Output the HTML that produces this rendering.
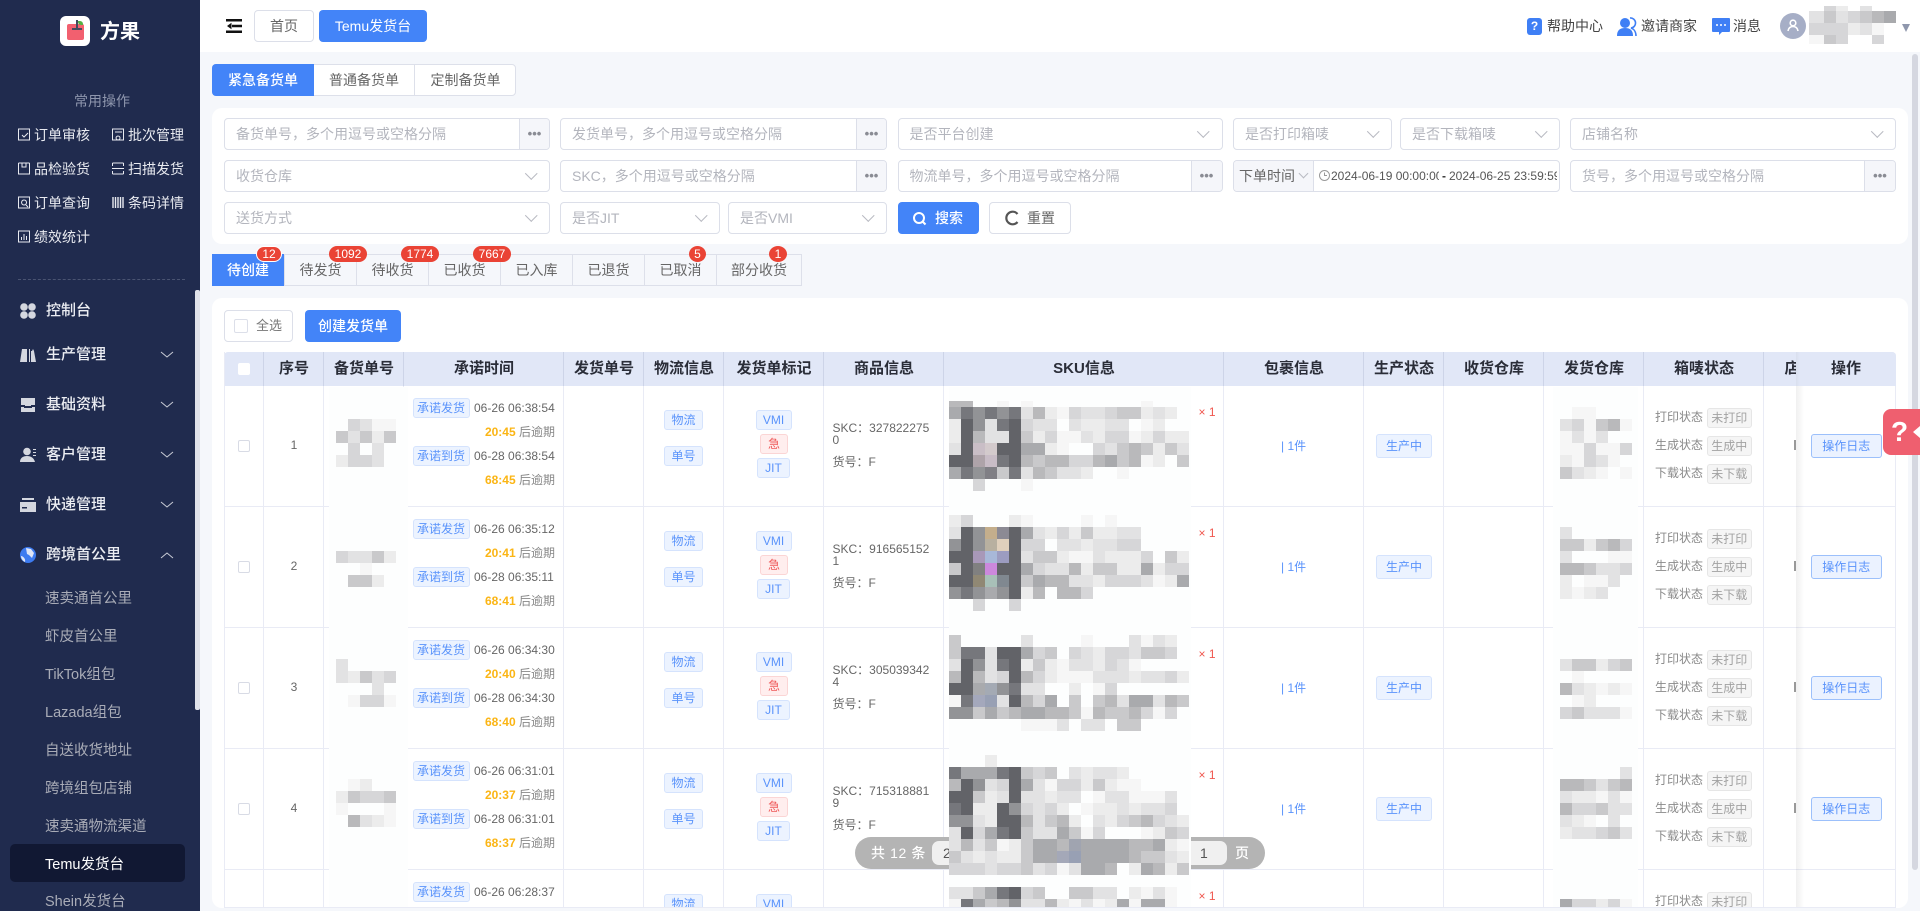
<!DOCTYPE html>
<html lang="zh-CN"><head><meta charset="utf-8"><title>Temu发货台</title>
<style>
*{box-sizing:border-box;margin:0;padding:0}
html,body{width:1920px;height:911px;overflow:hidden}
body{position:relative;background:#f5f7fb;font:12px "Liberation Sans","Noto Sans CJK SC",sans-serif;color:#666}
.a,.a2{position:absolute;white-space:nowrap}
#side{position:absolute;left:0;top:0;width:200px;height:911px;background:#202b4e;overflow:hidden;color:#fff}
#side>*{position:absolute;white-space:nowrap}
.sc{font-size:14px;line-height:20px;color:#e8eaf0}
.mi{left:46px;font-size:15px;line-height:20px;color:#eceef3;font-weight:500}
.sm{left:45px;font-size:14.5px;line-height:20px;color:#a9acb7}
.i{position:absolute;height:32px;border:1px solid #dcdfe9;border-radius:4px;background:#fff;line-height:30px;padding-left:11px;color:#b3b5bd;font-size:14px;white-space:nowrap;overflow:hidden}
.s::after{content:"";position:absolute;right:14px;top:8px;width:7.5px;height:7.5px;border-right:1px solid #b8bac2;border-bottom:1px solid #b8bac2;transform:rotate(45deg)}
.e{position:absolute;right:0;top:0;width:30px;height:30px;background:#f5f6fa;border-left:1px solid #dcdfe9;text-align:center;color:#8a8c94;font-size:13px;font-weight:700;line-height:30px;letter-spacing:0}
.st{position:absolute;top:254px;height:32px;width:73px;border:1px solid #dde0ea;background:#f5f7fb;text-align:center;line-height:30px;font-size:14px;color:#666}
.b{position:absolute;top:246px;height:16px;background:#ea4335;color:#fff;border-radius:8px;font-size:12px;line-height:16px;text-align:center}
.th{position:absolute;top:352px;height:34px;line-height:34px;text-align:center;font-size:15px;font-weight:700;color:#2a2d38;white-space:nowrap}
.vl{position:absolute;top:352px;width:1px;height:555px;background:#e9ebf5}
.vh{position:absolute;top:352px;width:1px;height:34px;background:#cdd4e8}
.hl{position:absolute;left:224px;width:1672px;height:1px;background:#e9ebf5}
.r{position:absolute;left:0;width:1920px;height:121px}
.r>*{position:absolute;white-space:nowrap}
.cb{left:238px;top:54px;width:12px;height:12px;border:1px solid #d8dbe5;border-radius:2px;background:#fff}
.n{left:264px;width:60px;top:49px;line-height:20px;text-align:center;font-size:12px}
.t{border:1px solid #d5e3fd;background:#ecf3ff;color:#5a93fb;border-radius:3px;text-align:center;height:20px;line-height:18px}
.d{left:474px;line-height:20px;height:20px}
.o{right:1365px;line-height:20px;height:20px;color:#888}
.o b{color:#fbb514}
.u{left:1706.5px;width:45.5px;height:20px;line-height:18px;text-align:center;background:#f5f5f5;border:1px solid #e6e6e6;border-radius:3px;color:#a2a2a2}
.l{left:1655px;height:20px;line-height:18px;color:#8a8a8a}
.skc{left:832.5px;top:36px;width:101px;line-height:12px;white-space:normal!important;word-break:break-all}
.m{position:absolute;display:flex;flex-wrap:wrap}
.m hr{width:12px;height:12px;border:0;margin:0;flex:none;background:transparent}
hr[k]{background:#626368!important}hr[m]{background:#76777c!important}hr[n]{background:#929396!important}hr[o]{background:#a9aaad!important}hr[p]{background:#b9b9bb!important}hr[q]{background:#c9c9cb!important}hr[r]{background:#d6d6d8!important}hr[s]{background:#e2e2e3!important}hr[t]{background:#ececec!important}hr[u]{background:#f6f6f6!important}
.sk{left:949px;width:240px}.wh{left:1560px;width:72px}.no{left:336px;width:72px}
.op{position:absolute;left:1810.6px;width:71.4px;height:24px;line-height:22px;text-align:center;background:#ebf2ff;border:1px solid #9cc0fb;border-radius:3px;color:#5a93fb}
</style></head><body>

<!-- header -->
<div class="a" style="left:200px;top:0;width:1720px;height:52px;background:#fff"></div>
<svg class="a" style="left:226px;top:19px" width="16" height="14" viewBox="0 0 16 14"><path d="M0 1.200h16M6 7h10M0 12.800h16" stroke="#111" stroke-width="2.500" fill="none"/><path d="M5.500 3.800L1 7l4.500 3.200z" fill="#111"/></svg>
<div class="a" style="left:254px;top:10px;width:60px;height:32px;border:1px solid #dcdfe9;border-radius:4px;background:#fff;text-align:center;line-height:30px;font-size:14px">首页</div>
<div class="a" style="left:319px;top:10px;width:108px;height:32px;border-radius:4px;background:#4384f8;color:#fff;text-align:center;line-height:32px;font-size:14px">Temu发货台</div>
<div class="a" style="left:1527px;top:18px;width:15px;height:17px;border-radius:3px;background:#3f7ff5;color:#fff;font-weight:700;font-size:12px;line-height:17px;text-align:center">?</div>
<div class="a" style="left:1547px;top:16px;font-size:14px;line-height:20px;color:#444">帮助中心</div>
<svg class="a" style="left:1617px;top:17px" width="20" height="19" viewBox="0 0 20 19"><circle cx="8" cy="6" r="5" fill="#3f7ff5"/><path d="M0 19c0-6 3-8 8-8s8 2 8 8z" fill="#3f7ff5"/><path d="M13 1a5 5 0 0 1 1 10c3 1 5 4 5 8" stroke="#3f7ff5" stroke-width="1.6" fill="none"/></svg>
<div class="a" style="left:1641px;top:16px;font-size:14px;line-height:20px;color:#444">邀请商家</div>
<svg class="a" style="left:1712px;top:18px" width="18" height="18" viewBox="0 0 18 18"><path d="M1 0h16a1 1 0 0 1 1 1v12a1 1 0 0 1-1 1h-7l-3 3v-3H1a1 1 0 0 1-1-1V1a1 1 0 0 1 1-1z" fill="#3f7ff5"/><circle cx="5" cy="7" r="1" fill="#fff"/><circle cx="9" cy="7" r="1" fill="#fff"/><circle cx="13" cy="7" r="1" fill="#fff"/></svg>
<div class="a" style="left:1733px;top:16px;font-size:14px;line-height:20px;color:#444">消息</div>
<div class="a" style="left:1780px;top:13px;width:26px;height:26px;border-radius:50%;background:#a6aec6"></div>
<svg class="a" style="left:1787px;top:19px" width="12" height="13" viewBox="0 0 12 13"><circle cx="6" cy="4" r="2.8" fill="none" stroke="#fff" stroke-width="1.6"/><path d="M1 12c.5-3 2-4.500 5-4.500s4.500 1.500 5 4.500" fill="none" stroke="#fff" stroke-width="1.6"/></svg>
<div class="m" style="left:1809px;top:6px;width:87px">
<hr style="height:5px;width:15px"><hr r style="height:5px"><hr t style="height:5px"><hr style="height:5px"><hr s style="height:5px"><hr style="height:5px"><hr style="height:5px">
<hr s style="width:15px"><hr q><hr s><hr r><hr q><hr p><hr o>
<hr r style="width:15px"><hr r><hr r><hr t><hr s><hr u><hr>
<hr u style="height:9px;width:15px"><hr q style="height:9px"><hr r style="height:9px"><hr style="height:9px"><hr style="height:9px"><hr r style="height:9px"><hr style="height:9px">
</div>
<div class="a" style="left:1902px;top:24px;border-left:4.500px solid transparent;border-right:4.500px solid transparent;border-top:8px solid #8f97ad"></div>

<!-- sidebar -->
<div id="side">
<div style="left:60px;top:16px;width:30px;height:30px;border-radius:6px;background:#fff"></div>
<div style="left:67px;top:24px;width:17px;height:16px;border-radius:2px;background:#f2606f"></div>
<div style="left:76px;top:20px;width:2px;height:9px;background:#444a5e"></div>
<div style="left:72px;top:28px;width:10px;height:2px;background:#444a5e"></div>
<div style="left:78px;top:21px;width:5px;height:4px;background:#52b043;border-radius:0 3px 0 3px"></div>
<div style="left:100px;top:18px;font-size:20px;line-height:28px;font-weight:700;color:#fff">方果</div>
<div style="left:74px;top:91px;font-size:14px;line-height:20px;color:#8e96ad">常用操作</div>

<svg style="left:0;top:0" width="200" height="250" fill="none" stroke="#e8eaf0" stroke-width="1"><path d="M18.500 129h11v11h-11zM22 135l2 2 4-4"/><path d="M112.500 129h11v11h-11zM115 132h7M118 136a2 2 0 1 0 .1 0"/><path d="M18.500 163v11h11v-11M18.500 163h11M22 163v4h4v-4" stroke-width="1"/><path d="M112.500 163h11M112.500 174h11M112.500 163v3M123.500 163v3M112.500 174v-3M123.500 174v-3M112 168.500h12" /><path d="M18.500 197h11v11h-11zM24 200a2.500 2.500 0 1 0 .1 0M26 205l2 2"/><path d="M113 197v11M115.500 197v11M118 197v11M120.500 197v11M123 197v11" stroke-width="1.400"/><path d="M18.500 231h11v11h-11zM21.500 240v-3M24 240v-6M26.500 240v-4"/></svg>
<div class="sc" style="left:34px;top:125px">订单审核</div><div class="sc" style="left:128px;top:125px">批次管理</div>
<div class="sc" style="left:34px;top:159px">品检验货</div><div class="sc" style="left:128px;top:159px">扫描发货</div>
<div class="sc" style="left:34px;top:193px">订单查询</div><div class="sc" style="left:128px;top:193px">条码详情</div>
<div class="sc" style="left:34px;top:227px">绩效统计</div>
<div style="left:18px;top:279px;width:167px;border-top:1px dashed #4a5472"></div>
<div style="left:195px;top:290px;width:5px;height:420px;background:#dfe1e9;border-radius:2px"></div>

<svg style="left:20px;top:303px" width="16" height="16" fill="#d4d7df"><circle cx="4" cy="4" r="3.800"/><circle cx="12" cy="4" r="3.800"/><circle cx="4" cy="12" r="3.800"/><circle cx="12" cy="12" r="3.800"/></svg>
<div class="mi" style="top:301px">控制台</div>
<svg style="left:20px;top:347px" width="16" height="16" fill="#d4d7df"><path d="M0 15L2 2h5v13zM9 15V2h1v13zM11 15V4h1l1-2 1 2 2 11z"/></svg>
<div class="mi" style="top:345px">生产管理</div>
<svg style="left:20px;top:397px" width="16" height="16" fill="#d4d7df"><path d="M1 1h14v7h-4v1H5V8H1zM1 10h3v1h8v-1h3v5H1z"/></svg>
<div class="mi" style="top:395px">基础资料</div>
<svg style="left:20px;top:447px" width="17" height="16" fill="#d4d7df"><circle cx="7" cy="4.500" r="3.800"/><path d="M0 15c0-4 3-6 7-6s7 2 8 6zM13 2h3v1h-3zM13 5h3v1h-3zM13 8h3v1h-3z"/></svg>
<div class="mi" style="top:445px">客户管理</div>
<svg style="left:20px;top:497px" width="16" height="16" fill="#d4d7df"><path d="M2 1h12v2H2zM0 5h16v10H0z"/><path d="M2 10h5v1.500H2z" fill="#202b4e"/></svg>
<div class="mi" style="top:495px">快递管理</div>
<svg style="left:20px;top:547px" width="16" height="16"><circle cx="8" cy="8" r="8" fill="#3d7bf0"/><path d="M6 1l5 1 3 4-2 5-3-3-2-1zM1 9c2 0 5 3 4 6C3 14 1 12 1 9z" fill="#dfe6f7"/></svg>
<div class="mi" style="top:545px">跨境首公里</div>
<svg style="left:0;top:0" width="200" height="600" fill="none" stroke="#c9ccd6" stroke-width="1"><path d="M161 352l6 5 6-5M161 402l6 5 6-5M161 452l6 5 6-5M161 502l6 5 6-5M161 558l6-5 6 5"/></svg>
<div class="sm" style="top:589px">速卖通首公里</div>
<div class="sm" style="top:627px">虾皮首公里</div>
<div class="sm" style="top:665px">TikTok组包</div>
<div class="sm" style="top:703px">Lazada组包</div>
<div class="sm" style="top:741px">自送收货地址</div>
<div class="sm" style="top:779px">跨境组包店铺</div>
<div class="sm" style="top:817px">速卖通物流渠道</div>
<div style="left:10px;top:844px;width:175px;height:38px;border-radius:5px;background:#111833"></div>
<div class="sm" style="top:855px;color:#fff">Temu发货台</div>
<div class="sm" style="top:894px;line-height:17px;height:17px">Shein发货台</div>
</div>

<!-- order type tabs -->
<div class="a" style="left:212px;top:64px;width:304px;height:32px;border:1px solid #dde0ea;border-radius:4px;background:#fff"></div>
<div class="a" style="left:212px;top:64px;width:102px;height:32px;border-radius:4px 0 0 4px;background:#4384f8;color:#fff;font-size:14px;font-weight:500;line-height:32px;text-align:center">紧急备货单</div>
<div class="a" style="left:314px;top:64px;width:101px;height:32px;font-size:14px;line-height:32px;text-align:center;border-right:1px solid #dde0ea">普通备货单</div>
<div class="a" style="left:415px;top:64px;width:101px;height:32px;font-size:14px;line-height:32px;text-align:center">定制备货单</div>

<!-- filter card -->
<div class="a" style="left:212px;top:108px;width:1696px;height:136px;border-radius:10px;background:#fff"></div>
<div class="i" style="left:224px;top:118px;width:326px">备货单号，多个用逗号或空格分隔<div class="e">•••</div></div>
<div class="i" style="left:560px;top:118px;width:327px">发货单号，多个用逗号或空格分隔<div class="e">•••</div></div>
<div class="i s" style="left:897.500px;top:118px;width:325px">是否平台创建</div>
<div class="i s" style="left:1233px;top:118px;width:159px">是否打印箱唛</div>
<div class="i s" style="left:1400px;top:118px;width:160px">是否下载箱唛</div>
<div class="i s" style="left:1570px;top:118px;width:326px">店铺名称</div>
<div class="i s" style="left:224px;top:160px;width:326px">收货仓库</div>
<div class="i" style="left:560px;top:160px;width:327px">SKC，多个用逗号或空格分隔<div class="e">•••</div></div>
<div class="i" style="left:897.500px;top:160px;width:325px">物流单号，多个用逗号或空格分隔<div class="e" style="width:31px">•••</div></div>
<div class="i" style="left:1233px;top:160px;width:327px;padding:0"></div>
<div class="a" style="left:1234px;top:161px;width:80px;height:30px;background:#f5f6fa;border-right:1px solid #dcdfe9;border-radius:4px 0 0 4px;font-size:14px;line-height:30px;padding-left:5px;color:#666">下单时间</div>
<div class="a" style="left:1300px;top:170px;width:7px;height:7px;border-right:1px solid #b8bac2;border-bottom:1px solid #b8bac2;transform:rotate(45deg)"></div>
<svg class="a" style="left:1319px;top:170px" width="11" height="11" fill="none" stroke="#999" stroke-width="1"><circle cx="5.500" cy="5.500" r="5"/><path d="M5.500 2.500v3h2.500"/></svg>
<div class="a" style="left:1331px;top:168px;width:108px;overflow:hidden;line-height:16px;color:#555">2024-06-19 00:00:00</div>
<div class="a" style="left:1442px;top:168px;line-height:16px;color:#333;font-weight:700">-</div>
<div class="a" style="left:1449px;top:168px;width:108px;overflow:hidden;line-height:16px;color:#555">2024-06-25 23:59:59</div>
<div class="i" style="left:1570px;top:160px;width:326px">货号，多个用逗号或空格分隔<div class="e" style="width:31px">•••</div></div>
<div class="i s" style="left:224px;top:202px;width:326px">送货方式</div>
<div class="i s" style="left:560px;top:202px;width:160px">是否JIT</div>
<div class="i s" style="left:728px;top:202px;width:159px">是否VMI</div>
<div class="a" style="left:897.500px;top:202px;width:81px;height:32px;border-radius:4px;background:#4384f8"></div>
<svg class="a" style="left:912px;top:211px" width="15" height="15" fill="none" stroke="#fff" stroke-width="2"><circle cx="7" cy="7" r="5"/><path d="M10.500 10.500l3 3"/></svg>
<div class="a" style="left:935px;top:208px;font-size:14px;font-weight:500;line-height:20px;color:#fff">搜索</div>
<div class="a" style="left:989px;top:202px;width:82px;height:32px;border:1px solid #dcdfe9;border-radius:4px;background:#fff"></div>
<svg class="a" style="left:1004px;top:210px" width="16" height="16" fill="none" stroke="#555" stroke-width="2.200"><path d="M13.500 4A6.300 6.300 0 1 0 13.500 12"/></svg>
<div class="a" style="left:1027px;top:208px;font-size:14px;line-height:20px;color:#666">重置</div>

<!-- status tabs -->
<div class="st" style="left:212px;background:#4384f8;border-color:#4384f8;color:#fff;width:72px;font-weight:500">待创建</div>
<div class="st" style="left:284px">待发货</div>
<div class="st" style="left:356px">待收货</div>
<div class="st" style="left:428px">已收货</div>
<div class="st" style="left:500px">已入库</div>
<div class="st" style="left:572px">已退货</div>
<div class="st" style="left:644px">已取消</div>
<div class="st" style="left:716px;width:86px">部分收货</div>
<div class="b" style="left:256px;width:26px;border:1px solid #fff;line-height:14px">12</div>
<div class="b" style="left:329px;width:38px">1092</div>
<div class="b" style="left:401px;width:38px">1774</div>
<div class="b" style="left:473px;width:38px">7667</div>
<div class="b" style="left:689px;width:17px;border-radius:50%">5</div>
<div class="b" style="left:769px;width:18px;border-radius:50%">1</div>

<!-- table card -->
<div class="a" style="left:212px;top:298px;width:1696px;height:610px;border-radius:10px;background:#fff"></div>
<div class="a" style="left:224px;top:310px;width:69px;height:32px;border:1px solid #dcdfe9;border-radius:4px;background:#fff"></div>
<div class="a" style="left:234px;top:319px;width:14px;height:14px;border:1px solid #dcdfe9;border-radius:2px"></div>
<div class="a" style="left:256px;top:316px;font-size:13px;line-height:20px;color:#777">全选</div>
<div class="a" style="left:305px;top:310px;width:96px;height:32px;border-radius:4px;background:#4384f8;color:#fff;font-size:14px;font-weight:500;line-height:32px;text-align:center">创建发货单</div>

<div class="a" style="left:224px;top:352px;width:1672px;height:34px;background:#e1e7f7;border-radius:4px 4px 0 0"></div>
<div class="a" style="left:238px;top:363px;width:12px;height:12px;background:#fff;border-radius:2px"></div>
<div class="th" style="left:264px;width:60px">序号</div>
<div class="th" style="left:324px;width:80px">备货单号</div>
<div class="th" style="left:404px;width:160px">承诺时间</div>
<div class="th" style="left:564px;width:80px">发货单号</div>
<div class="th" style="left:644px;width:80px">物流信息</div>
<div class="th" style="left:724px;width:100px">发货单标记</div>
<div class="th" style="left:824px;width:120px">商品信息</div>
<div class="th" style="left:944px;width:280px">SKU信息</div>
<div class="th" style="left:1224px;width:140px">包裹信息</div>
<div class="th" style="left:1364px;width:80px">生产状态</div>
<div class="th" style="left:1444px;width:100px">收货仓库</div>
<div class="th" style="left:1544px;width:100px">发货仓库</div>
<div class="th" style="left:1644px;width:120px">箱唛状态</div>
<div class="th" style="left:1784px;width:16px;overflow:hidden">店</div>

<div class="vl" style="left:224px"></div><div class="vl" style="left:263px"></div><div class="vl" style="left:323px"></div><div class="vl" style="left:403px"></div><div class="vl" style="left:563px"></div><div class="vl" style="left:643px"></div><div class="vl" style="left:723px"></div><div class="vl" style="left:823px"></div><div class="vl" style="left:943px"></div><div class="vl" style="left:1223px"></div><div class="vl" style="left:1363px"></div><div class="vl" style="left:1443px"></div><div class="vl" style="left:1543px"></div><div class="vl" style="left:1643px"></div><div class="vl" style="left:1763px"></div>
<div class="vh" style="left:263px"></div><div class="vh" style="left:323px"></div><div class="vh" style="left:403px"></div><div class="vh" style="left:563px"></div><div class="vh" style="left:643px"></div><div class="vh" style="left:723px"></div><div class="vh" style="left:823px"></div><div class="vh" style="left:943px"></div><div class="vh" style="left:1223px"></div><div class="vh" style="left:1363px"></div><div class="vh" style="left:1443px"></div><div class="vh" style="left:1543px"></div><div class="vh" style="left:1643px"></div><div class="vh" style="left:1763px"></div>
<div class="hl" style="top:506px"></div><div class="hl" style="top:627px"></div><div class="hl" style="top:748px"></div><div class="hl" style="top:869px"></div><div class="hl" style="top:907px"></div>

<div class="a" style="left:0;top:0;width:1920px;height:907px;overflow:hidden">

<div class="r" style="top:386px"><div class="cb"></div><div class="n">1</div>
<div class="t" style="left:412.500px;top:12px;width:57px">承诺发货</div><div class="d" style="top:12px">06-26 06:38:54</div><div class="o" style="top:36px"><b>20:45</b> 后逾期</div>
<div class="t" style="left:412.500px;top:60px;width:57px">承诺到货</div><div class="d" style="top:60px">06-28 06:38:54</div><div class="o" style="top:84px"><b>68:45</b> 后逾期</div>
<div class="t" style="left:664px;top:24px;width:39px">物流</div><div class="t" style="left:664px;top:60px;width:39px">单号</div>
<div class="t" style="left:755.500px;top:24px;width:36px">VMI</div><div class="t" style="left:760px;top:48px;width:28px;background:#ffeeee;border-color:#fbd5d5;color:#ef5a5a">急</div><div class="t" style="left:757px;top:72px;width:33px">JIT</div>
<div class="skc">SKC：3278222750</div><div style="left:832.500px;top:69px;line-height:14px">货号：F</div>
<div style="left:1198.500px;top:19px;line-height:14px;color:#f0574f">× 1</div><div style="left:1281px;top:53px;line-height:14px;color:#5a93fb">| 1件</div>
<div class="t" style="left:1376px;top:48px;width:56px;height:24px;line-height:22px">生产中</div>
<div class="l" style="top:22px">打印状态</div><div class="u" style="top:22px">未打印</div><div class="l" style="top:50px">生成状态</div><div class="u" style="top:50px">生成中</div><div class="l" style="top:78px">下载状态</div><div class="u" style="top:78px">未下载</div>
<div style="left:1794px;top:54px;width:2px;height:10px;background:#999"></div></div>

<div class="r" style="top:507px"><div class="cb"></div><div class="n">2</div>
<div class="t" style="left:412.500px;top:12px;width:57px">承诺发货</div><div class="d" style="top:12px">06-26 06:35:12</div><div class="o" style="top:36px"><b>20:41</b> 后逾期</div>
<div class="t" style="left:412.500px;top:60px;width:57px">承诺到货</div><div class="d" style="top:60px">06-28 06:35:11</div><div class="o" style="top:84px"><b>68:41</b> 后逾期</div>
<div class="t" style="left:664px;top:24px;width:39px">物流</div><div class="t" style="left:664px;top:60px;width:39px">单号</div>
<div class="t" style="left:755.500px;top:24px;width:36px">VMI</div><div class="t" style="left:760px;top:48px;width:28px;background:#ffeeee;border-color:#fbd5d5;color:#ef5a5a">急</div><div class="t" style="left:757px;top:72px;width:33px">JIT</div>
<div class="skc">SKC：9165651521</div><div style="left:832.500px;top:69px;line-height:14px">货号：F</div>
<div style="left:1198.500px;top:19px;line-height:14px;color:#f0574f">× 1</div><div style="left:1281px;top:53px;line-height:14px;color:#5a93fb">| 1件</div>
<div class="t" style="left:1376px;top:48px;width:56px;height:24px;line-height:22px">生产中</div>
<div class="l" style="top:22px">打印状态</div><div class="u" style="top:22px">未打印</div><div class="l" style="top:50px">生成状态</div><div class="u" style="top:50px">生成中</div><div class="l" style="top:78px">下载状态</div><div class="u" style="top:78px">未下载</div>
<div style="left:1794px;top:54px;width:2px;height:10px;background:#999"></div></div>

<div class="r" style="top:628px"><div class="cb"></div><div class="n">3</div>
<div class="t" style="left:412.500px;top:12px;width:57px">承诺发货</div><div class="d" style="top:12px">06-26 06:34:30</div><div class="o" style="top:36px"><b>20:40</b> 后逾期</div>
<div class="t" style="left:412.500px;top:60px;width:57px">承诺到货</div><div class="d" style="top:60px">06-28 06:34:30</div><div class="o" style="top:84px"><b>68:40</b> 后逾期</div>
<div class="t" style="left:664px;top:24px;width:39px">物流</div><div class="t" style="left:664px;top:60px;width:39px">单号</div>
<div class="t" style="left:755.500px;top:24px;width:36px">VMI</div><div class="t" style="left:760px;top:48px;width:28px;background:#ffeeee;border-color:#fbd5d5;color:#ef5a5a">急</div><div class="t" style="left:757px;top:72px;width:33px">JIT</div>
<div class="skc">SKC：3050393424</div><div style="left:832.500px;top:69px;line-height:14px">货号：F</div>
<div style="left:1198.500px;top:19px;line-height:14px;color:#f0574f">× 1</div><div style="left:1281px;top:53px;line-height:14px;color:#5a93fb">| 1件</div>
<div class="t" style="left:1376px;top:48px;width:56px;height:24px;line-height:22px">生产中</div>
<div class="l" style="top:22px">打印状态</div><div class="u" style="top:22px">未打印</div><div class="l" style="top:50px">生成状态</div><div class="u" style="top:50px">生成中</div><div class="l" style="top:78px">下载状态</div><div class="u" style="top:78px">未下载</div>
<div style="left:1794px;top:54px;width:2px;height:10px;background:#999"></div></div>

<div class="r" style="top:749px"><div class="cb"></div><div class="n">4</div>
<div class="t" style="left:412.500px;top:12px;width:57px">承诺发货</div><div class="d" style="top:12px">06-26 06:31:01</div><div class="o" style="top:36px"><b>20:37</b> 后逾期</div>
<div class="t" style="left:412.500px;top:60px;width:57px">承诺到货</div><div class="d" style="top:60px">06-28 06:31:01</div><div class="o" style="top:84px"><b>68:37</b> 后逾期</div>
<div class="t" style="left:664px;top:24px;width:39px">物流</div><div class="t" style="left:664px;top:60px;width:39px">单号</div>
<div class="t" style="left:755.500px;top:24px;width:36px">VMI</div><div class="t" style="left:760px;top:48px;width:28px;background:#ffeeee;border-color:#fbd5d5;color:#ef5a5a">急</div><div class="t" style="left:757px;top:72px;width:33px">JIT</div>
<div class="skc">SKC：7153188819</div><div style="left:832.500px;top:69px;line-height:14px">货号：F</div>
<div style="left:1198.500px;top:19px;line-height:14px;color:#f0574f">× 1</div><div style="left:1281px;top:53px;line-height:14px;color:#5a93fb">| 1件</div>
<div class="t" style="left:1376px;top:48px;width:56px;height:24px;line-height:22px">生产中</div>
<div class="l" style="top:22px">打印状态</div><div class="u" style="top:22px">未打印</div><div class="l" style="top:50px">生成状态</div><div class="u" style="top:50px">生成中</div><div class="l" style="top:78px">下载状态</div><div class="u" style="top:78px">未下载</div>
<div style="left:1794px;top:54px;width:2px;height:10px;background:#999"></div></div>

<div class="r" style="top:870px;height:37px;overflow:hidden">
<div class="t" style="left:412.500px;top:12px;width:57px">承诺发货</div><div class="d" style="top:12px">06-26 06:28:37</div>
<div class="t" style="left:664px;top:24px;width:39px">物流</div><div class="t" style="left:755.500px;top:24px;width:36px">VMI</div>
<div style="left:1198.500px;top:19px;line-height:14px;color:#f0574f">× 1</div>
<div class="l" style="top:22px">打印状态</div><div class="u" style="top:22px">未打印</div></div>

<!-- pagination -->
<div class="a" style="left:855px;top:837px;width:410px;height:32px;border-radius:16px;background:#b4b4b4"></div>
<div class="a" style="left:871px;top:843px;font-size:14px;line-height:20px;color:#fff;font-weight:500;letter-spacing:.6px">共 12 条</div>
<div class="a" style="left:932px;top:841px;width:40px;height:24px;border-radius:7px;background:#f0f0f0;color:#555;font-size:14px;line-height:24px;padding-left:11px">2</div>
<div class="a" style="left:1180px;top:841px;width:47px;height:24px;border-radius:7px;background:#f0f0f0;color:#555;font-size:14px;line-height:24px;padding-left:20px">1</div>
<div class="a" style="left:1235px;top:843px;font-size:14px;line-height:20px;color:#fff;font-weight:500">页</div>

<!-- redaction bands -->
<div class="a" style="left:949px;top:387px;width:242px;height:520px;background:#fdfefe"></div>
<div class="a" style="left:1553px;top:387px;width:85px;height:520px;background:#fdfefe"></div>
<div class="a" style="left:329px;top:387px;width:79px;height:520px;background:#fdfefe"></div>

<!-- SKU mosaics -->
<div class="m sk" style="top:395px;clip-path:inset(6px 0 0 0)">
<hr p><hr p><hr><hr><hr u><hr><hr u><hr><hr><hr><hr><hr><hr><hr><hr><hr><hr u><hr><hr><hr>
<hr o><hr m><hr n><hr m><hr n><hr m><hr s><hr p><hr t><hr u><hr r><hr s><hr s><hr r><hr q><hr q><hr t><hr s><hr t><hr>
<hr t><hr k><hr n><hr s><hr m><hr k><hr r><hr s><hr s><hr><hr s><hr t><hr t><hr s><hr s><hr><hr u><hr t><hr><hr>
<hr t><hr k><hr p><hr s><hr s><hr k><hr q><hr t><hr r><hr u><hr u><hr s><hr t><hr r><hr r><hr u><hr t><hr r><hr t><hr t>
<hr s><hr k><hr style="background:#c9bec6"><hr style="background:#d3cacc"><hr k><hr k><hr o><hr o><hr t><hr u><hr><hr><hr r><hr s><hr q><hr p><hr q><hr t><hr q><hr s>
<hr k><hr k><hr style="background:#aea3a9"><hr style="background:#c8bcc6"><hr m><hr k><hr p><hr q><hr p><hr p><hr r><hr r><hr p><hr o><hr q><hr p><hr u><hr t><hr><hr q>
<hr o><hr m><hr n><hr style="background:#807f85"><hr q><hr m><hr s><hr p><hr q><hr s><hr s><hr t><hr><hr><hr u><hr><hr><hr><hr><hr>
<hr><hr><hr r><hr><hr><hr><hr u><hr><hr><hr><hr><hr><hr><hr><hr><hr><hr><hr><hr><hr>
</div>
<div class="m sk" style="top:515px">
<hr t><hr r><hr><hr><hr><hr t><hr u><hr><hr><hr><hr><hr u><hr><hr u><hr><hr><hr><hr><hr><hr>
<hr s><hr k><hr n><hr style="background:#c4ae8c"><hr style="background:#8c8a94"><hr k><hr o><hr s><hr t><hr r><hr t><hr q><hr t><hr t><hr s><hr s><hr><hr><hr><hr>
<hr n><hr k><hr n><hr style="background:#b8b0a0"><hr style="background:#e0d0bc"><hr k><hr r><hr r><hr><hr s><hr s><hr t><hr s><hr s><hr r><hr r><hr><hr><hr><hr>
<hr k><hr k><hr style="background:#a898b8"><hr style="background:#a8b8d8"><hr style="background:#9c9cc0"><hr k><hr s><hr q><hr q><hr t><hr u><hr u><hr s><hr t><hr t><hr t><hr r><hr><hr q><hr t>
<hr q><hr k><hr style="background:#808080"><hr style="background:#cc88dc"><hr k><hr k><hr o><hr r><hr s><hr s><hr p><hr t><hr q><hr q><hr t><hr t><hr o><hr t><hr r><hr r>
<hr k><hr k><hr style="background:#908874"><hr style="background:#a8c0b8"><hr style="background:#808890"><hr k><hr q><hr o><hr p><hr p><hr s><hr s><hr t><hr r><hr r><hr r><hr s><hr u><hr t><hr o>
<hr n><hr m><hr n><hr o><hr n><hr k><hr t><hr p><hr><hr p><hr p><hr r><hr><hr><hr><hr><hr><hr><hr><hr>
<hr><hr><hr r><hr><hr><hr r><hr><hr><hr><hr><hr><hr><hr><hr><hr><hr><hr><hr><hr><hr>
</div>
<div class="m sk" style="top:635px">
<hr q><hr><hr><hr><hr><hr><hr s><hr><hr><hr><hr><hr u><hr><hr><hr><hr s><hr u><hr s><hr t><hr>
<hr q><hr m><hr m><hr s><hr k><hr k><hr o><hr r><hr q><hr><hr r><hr s><hr t><hr r><hr r><hr s><hr q><hr q><hr r><hr>
<hr s><hr k><hr n><hr s><hr m><hr k><hr t><hr q><hr t><hr u><hr s><hr s><hr t><hr r><hr s><hr u><hr><hr><hr><hr>
<hr p><hr k><hr p><hr s><hr r><hr k><hr p><hr r><hr t><hr u><hr u><hr u><hr s><hr s><hr s><hr t><hr s><hr s><hr r><hr t>
<hr k><hr k><hr o><hr style="background:#a4aab4"><hr n><hr m><hr s><hr s><hr><hr><hr t><hr><hr u><hr r><hr><hr><hr><hr><hr><hr>
<hr u><hr m><hr style="background:#a4a8bc"><hr style="background:#98a0b4"><hr s><hr k><hr p><hr r><hr o><hr><hr q><hr><hr q><hr p><hr s><hr o><hr o><hr s><hr p><hr q>
<hr n><hr n><hr q><hr o><hr q><hr p><hr o><hr o><hr p><hr p><hr q><hr u><hr p><hr q><hr q><hr p><hr r><hr u><hr r><hr>
<hr><hr><hr><hr><hr><hr><hr u><hr u><hr u><hr s><hr><hr s><hr s><hr><hr q><hr q><hr><hr><hr><hr>
</div>
<div class="m sk" style="top:755px">
<hr><hr><hr><hr t><hr><hr><hr><hr><hr><hr><hr><hr><hr><hr><hr><hr><hr><hr><hr><hr>
<hr m><hr o><hr o><hr o><hr m><hr k><hr q><hr r><hr q><hr><hr s><hr t><hr s><hr s><hr t><hr><hr><hr><hr><hr>
<hr p><hr k><hr n><hr s><hr r><hr k><hr o><hr s><hr u><hr r><hr r><hr t><hr q><hr t><hr u><hr u><hr><hr><hr><hr>
<hr k><hr k><hr q><hr t><hr s><hr k><hr s><hr s><hr t><hr s><hr s><hr><hr u><hr s><hr s><hr u><hr u><hr u><hr s><hr>
<hr m><hr k><hr t><hr t><hr k><hr n><hr r><hr s><hr r><hr t><hr><hr u><hr t><hr t><hr s><hr t><hr s><hr s><hr r><hr>
<hr n><hr n><hr s><hr t><hr k><hr k><hr p><hr s><hr q><hr p><hr t><hr><hr s><hr t><hr r><hr q><hr p><hr r><hr s><hr t>
<hr s><hr k><hr r><hr o><hr m><hr k><hr q><hr s><hr s><hr o><hr q><hr u><hr r><hr><hr><hr><hr u><hr t><hr q><hr r>
<hr s><hr p><hr s><hr q><hr u><hr t><hr q><hr o><hr o><hr p><hr style="background:#a0a4b0"><hr o><hr o><hr o><hr o><hr p><hr p><hr o><hr t><hr u>
<hr q><hr s><hr t><hr s><hr t><hr t><hr q><hr o><hr o><hr style="background:#a4a8b8"><hr style="background:#98a0b4"><hr o><hr o><hr o><hr o><hr p><hr q><hr q><hr s><hr t>
<hr r><hr r><hr r><hr s><hr r><hr r><hr q><hr s><hr r><hr u><hr s><hr o><hr o><hr p><hr><hr t><hr o><hr p><hr t><hr q>
</div>
<div class="m sk" style="top:887px">
<hr s><hr s><hr q><hr o><hr m><hr k><hr r><hr q><hr><hr><hr q><hr q><hr s><hr s><hr><hr t><hr u><hr s><hr u><hr>
<hr u><hr m><hr o><hr q><hr p><hr n><hr s><hr s><hr p><hr t><hr u><hr s><hr u><hr t><hr o><hr u><hr o><hr o><hr u><hr>
</div>

<!-- warehouse mosaics -->
<div class="m wh" style="top:407px"><hr><hr u><hr u><hr><hr><hr>
<hr s><hr r><hr u><hr q><hr p><hr u>
<hr u><hr s><hr u><hr s><hr><hr>
<hr u><hr u><hr r><hr u><hr u><hr r>
<hr t><hr u><hr r><hr s><hr u><hr>
<hr q><hr s><hr t><hr u><hr><hr u></div>
<div class="m wh" style="top:527px"><hr s><hr><hr><hr><hr><hr>
<hr q><hr q><hr t><hr q><hr p><hr r>
<hr s><hr><hr><hr><hr u><hr u>
<hr p><hr p><hr q><hr s><hr s><hr r>
<hr t><hr><hr u><hr u><hr s><hr>
<hr t><hr u><hr t><hr s><hr><hr></div>
<div class="m wh" style="top:659px"><hr s><hr q><hr q><hr t><hr r><hr q>
<hr><hr u><hr><hr><hr><hr>
<hr p><hr s><hr t><hr u><hr t><hr u>
<hr><hr u><hr t><hr><hr><hr>
<hr r><hr q><hr s><hr s><hr s><hr u></div>
<div class="m wh" style="top:767px"><hr><hr><hr><hr><hr><hr s>
<hr p><hr p><hr q><hr s><hr q><hr p>
<hr s><hr t><hr t><hr u><hr s><hr u>
<hr p><hr r><hr r><hr q><hr s><hr s>
<hr s><hr t><hr u><hr><hr s><hr>
<hr t><hr s><hr s><hr r><hr q><hr s></div>
<div class="m wh" style="top:899px"><hr o><hr r><hr r><hr t><hr r><hr u></div>

<!-- order number mosaics -->
<div class="m no" style="top:419px"><hr><hr r><hr s><hr u><hr u><hr>
<hr q><hr s><hr q><hr t><hr q><hr>
<hr><hr r><hr><hr s><hr><hr>
<hr t><hr r><hr r><hr s><hr><hr></div>
<div class="m no" style="top:551px"><hr r><hr s><hr s><hr q><hr t><hr>
<hr><hr><hr u><hr><hr><hr>
<hr><hr q><hr q><hr t><hr><hr></div>
<div class="m no" style="top:659px"><hr s><hr><hr><hr><hr><hr>
<hr s><hr t><hr q><hr s><hr r><hr>
<hr><hr><hr><hr s><hr><hr>
<hr><hr u><hr r><hr r><hr u><hr></div>
<div class="m no" style="top:779px"><hr><hr u><hr t><hr><hr><hr>
<hr t><hr q><hr r><hr r><hr q><hr>
<hr u><hr><hr><hr><hr u><hr>
<hr><hr p><hr s><hr t><hr u><hr></div>

<!-- fixed op column -->
<div class="a" style="left:1796px;top:386px;width:100px;height:521px;background:#fff;border-right:1px solid #e9ebf5"></div>
<div class="hl" style="top:506px;left:1796px;width:100px"></div><div class="hl" style="top:627px;left:1796px;width:100px"></div><div class="hl" style="top:748px;left:1796px;width:100px"></div><div class="hl" style="top:869px;left:1796px;width:100px"></div>
<div class="a" style="left:1796px;top:386px;width:8px;height:521px;background:linear-gradient(90deg,rgba(0,0,0,.06),transparent)"></div>
<div class="op" style="top:434px">操作日志</div>
<div class="op" style="top:555px">操作日志</div>
<div class="op" style="top:676px">操作日志</div>
<div class="op" style="top:797px">操作日志</div>
</div>

<div class="a" style="left:1796px;top:352px;width:100px;height:34px;background:#e1e7f7;border-radius:0 4px 0 0;text-align:center;line-height:34px;font-size:15px;font-weight:700;color:#2a2d38">操作</div>
<div class="a" style="left:1796px;top:352px;width:4px;height:34px;background:linear-gradient(90deg,rgba(0,0,0,.04),transparent)"></div>

<!-- help tab + page scrollbar -->
<div class="a" style="left:1912px;top:54px;width:6px;height:816px;border-radius:3px;background:#d5d7e0"></div>
<div class="a" style="left:1883px;top:409px;width:37px;height:46px;border-radius:8px 0 0 8px;background:#ef5f6f"></div>
<div class="a" style="left:1891px;top:416px;font-size:28px;line-height:32px;font-weight:700;color:#fff">?</div>
<div class="a" style="left:1913px;top:426px;border-top:6px solid transparent;border-bottom:6px solid transparent;border-right:7px solid #fff"></div>
</body></html>
